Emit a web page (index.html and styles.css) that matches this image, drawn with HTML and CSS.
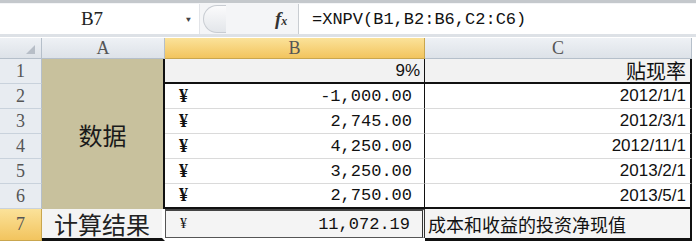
FILE: index.html
```html
<!DOCTYPE html>
<html lang="zh">
<head>
    <meta charset="UTF-8">
    <title>XNPV</title>
    <link rel="stylesheet" href="styles.css">
</head>
<body>
    <div class="barra">
        <div class="nombre">
            <span class="ref">B7</span>
            <span class="flecha">&#9660;</span>
        </div>
        <div class="mango"></div>
        <div class="fx"><i>f</i><small>x</small></div>
        <div class="formula">=XNPV(B1,B2:B6,C2:C6)</div>
    </div>

    <div class="hoja">
        <div class="esquina"><span></span></div>
        <div class="col">A</div>
        <div class="col activa">B</div>
        <div class="col">C</div>

        <div class="fila f1">1</div>
        <div class="fila f2">2</div>
        <div class="fila f3">3</div>
        <div class="fila f4">4</div>
        <div class="fila f5">5</div>
        <div class="fila f6">6</div>
        <div class="fila f7 activa">7</div>

        <div class="datos">数据</div>

        <div class="celda b1 gris num">9%</div>
        <div class="celda c1 gris cjk">贴现率</div>

        <div class="celda b r2"><span class="yen">¥</span><span class="mono">-1,000.00</span></div>
        <div class="celda c r2 num">2012/1/1</div>
        <div class="celda b r3"><span class="yen">¥</span><span class="mono">2,745.00</span></div>
        <div class="celda c r3 num">2012/3/1</div>
        <div class="celda b r4"><span class="yen">¥</span><span class="mono">4,250.00</span></div>
        <div class="celda c r4 num">2012/11/1</div>
        <div class="celda b r5"><span class="yen">¥</span><span class="mono">3,250.00</span></div>
        <div class="celda c r5 num">2013/2/1</div>
        <div class="celda b r6"><span class="yen">¥</span><span class="mono">2,750.00</span></div>
        <div class="celda c r6 num">2013/5/1</div>

        <div class="celda a7">计算结果</div>
        <div class="celda b7"><span class="yen chico">¥</span><span class="mono">11,072.19</span></div>
        <div class="celda c7">成本和收益的投资净现值</div>
    </div>
</body>
</html>
```

FILE: styles.css
```css
body {
    margin: 0;
    width: 696px;
    height: 244px;
    overflow: hidden;
    background-color: #ffffff;
    font-family: "Liberation Mono", monospace;
}

/* barra de formulas */
.barra {
    height: 30px;
    display: flex;
    align-items: stretch;
    border-top: 3px solid #c4c8cc;
    border-bottom: 3px solid #dde1e6;
    background-color: #f4f5f7;
    box-sizing: content-box;
    padding-top: 1px;
}

.nombre {
    width: 199px;
    display: flex;
    align-items: center;
    background-color: #ffffff;
    border-right: 1px solid #e2e4e8;
}

.ref {
    width: 184px;
    text-align: center;
    font-family: "Liberation Serif", serif;
    font-size: 19px;
    color: #222;
}

.flecha {
    font-size: 8px;
    color: #444;
    margin-left: 2px;
}

.mango {
    width: 22px;
    margin: 1px 0 1px 3px;
    border: 1px solid #c8ccd2;
    border-right: none;
    border-radius: 14px 0 0 14px;
    background: linear-gradient(#fbfbfc, #e3e6ea);
}

.fx {
    margin-left: auto;
    width: 20px;
    padding-right: 3px;
    display: flex;
    align-items: center;
    font-family: "Liberation Serif", serif;
    color: #333;
    font-weight: bold;
    border-right: 1px solid #c9cdd2;
}

.fx i {
    font-size: 19px;
}

.fx small {
    font-size: 12px;
    font-style: italic;
    margin-top: 5px;
}

.formula {
    width: 384px;
    padding-left: 13px;
    display: flex;
    align-items: center;
    background-color: #ffffff;
    font-size: 17px;
    color: #111;
}

/* hoja */
.hoja {
    display: grid;
    grid-template-columns: 42px 123px 260px 267px;
    grid-template-rows: 21px repeat(6, 25px) 32px;
    margin-top: 1px;
}

.esquina,
.col,
.fila {
    background: linear-gradient(#eef1f5, #dde2e8);
    color: #555;
    font-family: "Liberation Serif", serif;
    font-size: 18px;
    display: flex;
    align-items: center;
    justify-content: center;
    border-right: 1px solid #b5bfca;
    border-bottom: 1px solid #b5bfca;
    box-sizing: border-box;
}

.esquina {
    justify-content: flex-end;
    align-items: flex-end;
    padding: 0 6px 4px 0;
}

.esquina span {
    width: 0;
    height: 0;
    border-left: 9px solid transparent;
    border-bottom: 9px solid #b7bec7;
}

.fila {
    background: #e8ecf1;
    border-bottom-color: #c9d2dc;
}

.col.activa,
.fila.activa {
    background: linear-gradient(#fbe29a, #f2c45e);
    border-color: #c9a64e;
}

.datos {
    grid-column: 2;
    grid-row: 2 / span 6;
    background-color: #c8c19d;
    border-right: 2px solid #111;
    display: flex;
    align-items: center;
    justify-content: center;
    font-family: "Noto Sans CJK SC", sans-serif;
    font-size: 24px;
    color: #1a1a1a;
}

.celda {
    display: flex;
    align-items: center;
    border-bottom: 1px solid #dadada;
    box-sizing: border-box;
    color: #111;
    padding: 0 4px;
}

.gris {
    background-color: #f2f2f2;
}

.b1 { grid-column: 3; grid-row: 2; border-bottom: 2px solid #111; border-right: 1px solid #111; }
.c1 { grid-column: 4; grid-row: 2; border-bottom: 2px solid #111; border-right: 2px solid #111; }

.num {
    justify-content: flex-end;
    font-family: "Liberation Sans", sans-serif;
    font-size: 17px;
}

.cjk {
    justify-content: flex-end;
    font-family: "Noto Sans CJK SC", sans-serif;
    font-size: 20px;
}

.b {
    grid-column: 3;
    border-right: 1px solid #111;
    padding: 0 12px 0 14px;
}

.c {
    grid-column: 4;
    border-right: 2px solid #111;
}

.r2 { grid-row: 3; }
.r3 { grid-row: 4; }
.r4 { grid-row: 5; }
.r5 { grid-row: 6; }
.r6 { grid-row: 7; border-bottom: 2px solid #111; }

.yen {
    font-family: "Liberation Serif", serif;
    font-size: 18px;
    font-weight: bold;
}

.chico {
    font-size: 14px;
    font-weight: normal;
}

.mono {
    margin-left: auto;
    font-size: 17px;
}

.a7 {
    grid-column: 2;
    grid-row: 8;
    background-color: #f4f4f4;
    justify-content: center;
    font-family: "Noto Sans CJK SC", sans-serif;
    font-size: 24px;
    color: #222;
    border-bottom: 3px solid #111;
    border-right: 3px solid #ffffff;
}

.b7 {
    grid-column: 3;
    grid-row: 8;
    background-color: #f4f4f4;
    border: 1px solid #555;
    border-right: 3px double #333;
    border-top: 2px solid #444;
    margin-bottom: 3px;
    padding: 0 12px 0 14px;
}

.c7 {
    grid-column: 4;
    grid-row: 8;
    background-color: #f4f4f4;
    font-family: "Noto Sans CJK SC", sans-serif;
    font-size: 18px;
    border-bottom: 3px solid #111;
    border-right: 2px solid #111;
    padding-left: 3px;
}
```
